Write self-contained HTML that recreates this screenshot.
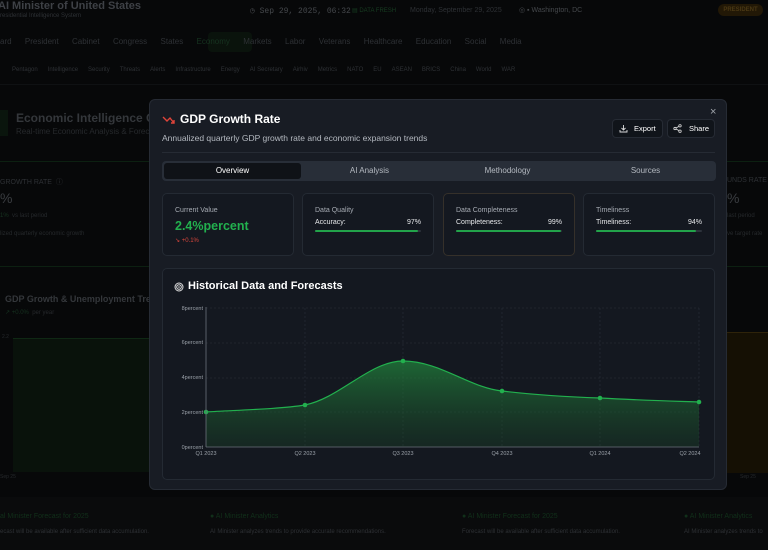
<!DOCTYPE html>
<html><head><meta charset="utf-8"><style>
*{margin:0;padding:0;box-sizing:border-box}
body{width:768px;height:550px;overflow:hidden;background:#070809;font-family:"Liberation Sans",sans-serif;position:relative;color:#fff}
.a{position:absolute;white-space:nowrap}
.dim{color:#2e3135}
.modal{position:absolute;left:149px;top:99px;width:578px;height:391px;background:#181c24;border:1px solid #262b34;border-radius:6px}
.card{position:absolute;top:93px;width:132px;height:63px;background:#141820;border:1px solid #242a33;border-radius:5px}
.lbl{font-size:7px;color:#a6abb3;position:absolute;left:12px;top:13px}
.row{position:absolute;left:12px;right:12px;top:25px;font-size:7px;color:#e6e8ea;display:flex;justify-content:space-between}
.bar{position:absolute;left:12px;right:12px;top:36px;height:2px;background:#2d333c;border-radius:1px}
.bar i{display:block;height:2px;background:#22a34a;border-radius:1px}
.tab{position:absolute;top:66px;text-align:center;font-size:8px;color:#b4b9c0}
</style></head><body>
<div class="a" style="left:-2px;top:0;font-size:11px;font-weight:bold;color:#3e4146">AI Minister of United States</div>
<div class="a" style="left:0;top:13px;font-size:6px;color:#2e3135">residential Intelligence System</div>
<div class="a" style="left:250px;top:6px;font-size:8px;color:#45484c;font-family:'Liberation Mono',monospace">◷ Sep 29, 2025, 06:32</div>
<div class="a" style="left:352px;top:7px;font-size:6px;color:#173d21">▤ DATA FRESH</div>
<div class="a" style="left:410px;top:7px;font-size:7px;color:#2e3135">Monday, September 29, 2025</div>
<div class="a" style="left:519px;top:6px;font-size:7px;color:#45484c">◎ ▪ Washington, DC</div>
<div class="a" style="left:718px;top:4px;width:45px;height:12px;border-radius:6px;background:#221806;color:#4a3814;font-size:6px;font-weight:bold;text-align:center;line-height:12px">PRESIDENT</div>
<div class="a" style="left:208px;top:32px;width:44px;height:20px;background:#0a130c;border-radius:4px"></div>
<div class="a dim" style="left:0;top:37px;font-size:8px">ard&nbsp;&nbsp;&nbsp;&nbsp;&nbsp;&nbsp;President&nbsp;&nbsp;&nbsp;&nbsp;&nbsp;&nbsp;Cabinet&nbsp;&nbsp;&nbsp;&nbsp;&nbsp;&nbsp;Congress&nbsp;&nbsp;&nbsp;&nbsp;&nbsp;&nbsp;States&nbsp;&nbsp;&nbsp;&nbsp;&nbsp;&nbsp;<span style="color:#163320">Economy</span>&nbsp;&nbsp;&nbsp;&nbsp;&nbsp;&nbsp;Markets&nbsp;&nbsp;&nbsp;&nbsp;&nbsp;&nbsp;Labor&nbsp;&nbsp;&nbsp;&nbsp;&nbsp;&nbsp;Veterans&nbsp;&nbsp;&nbsp;&nbsp;&nbsp;&nbsp;Healthcare&nbsp;&nbsp;&nbsp;&nbsp;&nbsp;&nbsp;Education&nbsp;&nbsp;&nbsp;&nbsp;&nbsp;&nbsp;Social&nbsp;&nbsp;&nbsp;&nbsp;&nbsp;&nbsp;Media</div>
<div class="a dim" style="left:12px;top:67px;font-size:6px">Pentagon&nbsp;&nbsp;&nbsp;&nbsp;&nbsp;&nbsp;Intelligence&nbsp;&nbsp;&nbsp;&nbsp;&nbsp;&nbsp;Security&nbsp;&nbsp;&nbsp;&nbsp;&nbsp;&nbsp;Threats&nbsp;&nbsp;&nbsp;&nbsp;&nbsp;&nbsp;Alerts&nbsp;&nbsp;&nbsp;&nbsp;&nbsp;&nbsp;Infrastructure&nbsp;&nbsp;&nbsp;&nbsp;&nbsp;&nbsp;Energy&nbsp;&nbsp;&nbsp;&nbsp;&nbsp;&nbsp;AI Secretary&nbsp;&nbsp;&nbsp;&nbsp;&nbsp;&nbsp;Airhiv&nbsp;&nbsp;&nbsp;&nbsp;&nbsp;&nbsp;Metrics&nbsp;&nbsp;&nbsp;&nbsp;&nbsp;&nbsp;NATO&nbsp;&nbsp;&nbsp;&nbsp;&nbsp;&nbsp;EU&nbsp;&nbsp;&nbsp;&nbsp;&nbsp;&nbsp;ASEAN&nbsp;&nbsp;&nbsp;&nbsp;&nbsp;&nbsp;BRICS&nbsp;&nbsp;&nbsp;&nbsp;&nbsp;&nbsp;China&nbsp;&nbsp;&nbsp;&nbsp;&nbsp;&nbsp;World&nbsp;&nbsp;&nbsp;&nbsp;&nbsp;&nbsp;WAR</div>
<div class="a" style="left:0;top:84px;width:768px;height:1px;background:#0f1113"></div>
<div class="a" style="left:0;top:110px;width:8px;height:26px;background:#0a150d"></div>
<div class="a" style="left:16px;top:111px;font-size:12px;font-weight:bold;color:#34373b">Economic Intelligence C</div>
<div class="a" style="left:16px;top:127px;font-size:8px;color:#26292c">Real-time Economic Analysis &amp; Forecasting</div>
<div class="a" style="left:0;top:161px;width:768px;height:1px;background:#0c2011"></div>
<div class="a" style="left:0;top:177px;font-size:7px;color:#2e3135">GROWTH RATE&nbsp;&nbsp;ⓘ</div>
<div class="a" style="left:0;top:190px;font-size:14px;color:#3a3d41">%</div>
<div class="a" style="left:0;top:213px;font-size:6px;color:#163320">1%&nbsp;&nbsp;<span style="color:#26292c">vs last period</span></div>
<div class="a" style="left:0;top:231px;font-size:6px;color:#26292c">lized quarterly economic growth</div>
<div class="a" style="left:0;top:266px;width:768px;height:1px;background:#0c2011"></div>
<div class="a" style="left:5px;top:294px;font-size:9px;font-weight:bold;color:#34373b">GDP Growth &amp; Unemployment Tre</div>
<div class="a" style="left:5px;top:309px;font-size:6px;color:#163320">↗ +0.0%&nbsp;&nbsp;<span style="color:#26292c">per year</span></div>
<div class="a" style="left:13px;top:338px;width:136px;height:134px;background:#09120b;border-top:1px solid #0f2814"></div>
<div class="a" style="left:2px;top:334px;font-size:5px;color:#26292c">2.2</div>
<div class="a" style="left:0;top:474px;font-size:5px;color:#26292c">Sep 25</div>
<div class="a" style="left:727px;top:332px;width:41px;height:141px;background:#151004;border-top:1px solid #2e230a"></div>
<div class="a" style="left:727px;top:177px;font-size:7px;color:#2e3135">UNDS RATE</div>
<div class="a" style="left:727px;top:190px;font-size:14px;color:#3a3d41">%</div>
<div class="a" style="left:727px;top:213px;font-size:6px;color:#26292c">last period</div>
<div class="a" style="left:727px;top:231px;font-size:6px;color:#26292c">ve target rate</div>
<div class="a" style="left:740px;top:474px;font-size:5px;color:#26292c">Sep 25</div>
<div class="a" style="left:0;top:497px;width:768px;height:53px;background:#0a0b0c"></div>
<div class="a" style="left:0;top:513px;font-size:7px;color:#11301a">al Minister Forecast for 2025</div>
<div class="a" style="left:0;top:529px;font-size:6px;color:#2e3135">ecast will be available after sufficient data accumulation.</div>
<div class="a" style="left:210px;top:513px;font-size:7px;color:#11301a">● AI Minister Analytics</div>
<div class="a" style="left:210px;top:529px;font-size:6px;color:#2e3135">AI Minister analyzes trends to provide accurate recommendations.</div>
<div class="a" style="left:462px;top:513px;font-size:7px;color:#11301a">● AI Minister Forecast for 2025</div>
<div class="a" style="left:462px;top:529px;font-size:6px;color:#2e3135">Forecast will be available after sufficient data accumulation.</div>
<div class="a" style="left:684px;top:513px;font-size:7px;color:#11301a">● AI Minister Analytics</div>
<div class="a" style="left:684px;top:529px;font-size:6px;color:#2e3135">AI Minister analyzes trends to</div>

<div class="modal">
 <svg class="a" style="left:12px;top:15px" width="14" height="10" viewBox="0 0 14 10"><path d="M1 2 L5 6 L8 3 L12 8 M9 8 H12 V5" stroke="#e0443a" stroke-width="1.4" fill="none"/></svg>
 <div class="a" style="left:30px;top:12px;font-size:12px;font-weight:bold;color:#fff">GDP Growth Rate</div>
 <div class="a" style="left:12px;top:33px;font-size:8.5px;color:#b4b9c0">Annualized quarterly GDP growth rate and economic expansion trends</div>
 <div class="a" style="left:560px;top:6px;font-size:11px;color:#a0a5ab">×</div>
 <div class="a" style="left:462px;top:19px;width:51px;height:19px;background:#10141a;border:1px solid #262b34;border-radius:4px;font-size:7.5px;line-height:17px;color:#fff;padding-left:21px">Export<svg class="a" style="left:6px;top:4px" width="9" height="9" viewBox="0 0 9 9"><path d="M4.5 1V6M2.5 4L4.5 6L6.5 4M1 6V8H8V6" stroke="#ddd" stroke-width=".9" fill="none"/></svg></div>
 <div class="a" style="left:517px;top:19px;width:48px;height:19px;background:#10141a;border:1px solid #262b34;border-radius:4px;font-size:7.5px;line-height:17px;color:#fff;padding-left:21px">Share<svg class="a" style="left:5px;top:4px" width="9" height="9" viewBox="0 0 9 9"><circle cx="7" cy="1.8" r="1.2" stroke="#ddd" stroke-width=".8" fill="none"/><circle cx="2" cy="4.5" r="1.2" stroke="#ddd" stroke-width=".8" fill="none"/><circle cx="7" cy="7.2" r="1.2" stroke="#ddd" stroke-width=".8" fill="none"/><path d="M3 4L6 2.4M3 5L6 6.6" stroke="#ddd" stroke-width=".8"/></svg></div>
 <div class="a" style="left:12px;top:52px;width:553px;height:1px;background:#262b34"></div>
 <div class="a" style="left:12px;top:61px;width:554px;height:20px;background:#282e38;border-radius:4px"></div>
 <div class="a" style="left:14px;top:63px;width:137px;height:16px;background:#0f1217;border-radius:3px"></div>
 <div class="tab" style="left:14px;width:137px;color:#fff">Overview</div>
 <div class="tab" style="left:151px;width:137px">AI Analysis</div>
 <div class="tab" style="left:288px;width:139px">Methodology</div>
 <div class="tab" style="left:427px;width:137px">Sources</div>
 <div class="card" style="left:12px"><div class="lbl">Current Value</div><div class="a" style="left:12px;top:25px;font-size:12.5px;font-weight:bold;color:#22b04e">2.4%percent</div><div class="a" style="left:12px;top:43px;font-size:6px;color:#d8463c">↘ +0.1%</div></div>
 <div class="card" style="left:152px"><div class="lbl">Data Quality</div><div class="row"><span>Accuracy:</span><span>97%</span></div><div class="bar"><i style="width:97%"></i></div></div>
 <div class="card" style="left:293px;border-color:#35302a"><div class="lbl">Data Completeness</div><div class="row"><span>Completeness:</span><span>99%</span></div><div class="bar"><i style="width:99%"></i></div></div>
 <div class="card" style="left:433px"><div class="lbl">Timeliness</div><div class="row"><span>Timeliness:</span><span>94%</span></div><div class="bar"><i style="width:94%"></i></div></div>
 <div class="a" style="left:12px;top:168px;width:553px;height:212px;background:#141820;border:1px solid #242a33;border-radius:5px"></div>
 <svg class="a" style="left:24px;top:182px" width="10" height="10" viewBox="0 0 10 10"><circle cx="5" cy="5" r="4" stroke="#ddd" fill="none"/><circle cx="5" cy="5" r="2.3" stroke="#ddd" fill="none"/><circle cx="5" cy="5" r=".8" fill="#ddd"/></svg>
 <div class="a" style="left:38px;top:180px;font-size:11px;font-weight:bold;color:#fff">Historical Data and Forecasts</div>
</div>
<svg class="a" style="left:0;top:0" width="768" height="550">
 <defs><linearGradient id="g" x1="0" y1="0" x2="0" y2="1"><stop offset="0" stop-color="#22883e" stop-opacity=".7"/><stop offset="1" stop-color="#1a4a28" stop-opacity=".3"/></linearGradient></defs>
 <g stroke="#2a303a" stroke-dasharray="2 2" stroke-width=".6">
  <line x1="206" y1="308" x2="699" y2="308"/><line x1="206" y1="343" x2="699" y2="343"/><line x1="206" y1="378" x2="699" y2="378"/><line x1="206" y1="412" x2="699" y2="412"/>
  <line x1="305" y1="308" x2="305" y2="447"/><line x1="403" y1="308" x2="403" y2="447"/><line x1="502" y1="308" x2="502" y2="447"/><line x1="600" y1="308" x2="600" y2="447"/><line x1="699" y1="308" x2="699" y2="447"/>
 </g>
 <path d="M206 412 C240 410 280 409 305 405 C340 398 370 361 403 361 C440 361 470 388 502 391 C535 395 570 397 600 398 C635 400 670 401 699 402 L699 447 L206 447 Z" fill="url(#g)"/>
 <path d="M206 412 C240 410 280 409 305 405 C340 398 370 361 403 361 C440 361 470 388 502 391 C535 395 570 397 600 398 C635 400 670 401 699 402" stroke="#22b04e" stroke-width="1.2" fill="none"/>
 <g fill="#22b04e"><circle cx="206" cy="412" r="2.3"/><circle cx="305" cy="405" r="2.3"/><circle cx="403" cy="361" r="2.3"/><circle cx="502" cy="391" r="2.3"/><circle cx="600" cy="398" r="2.3"/><circle cx="699" cy="402" r="2.3"/></g>
 <line x1="206" y1="307" x2="206" y2="447" stroke="#6b717a" stroke-width=".8"/><line x1="206" y1="447" x2="699" y2="447" stroke="#6b717a" stroke-width=".8"/>
 <g font-family="Liberation Sans" font-size="5.5" fill="#9aa0a8" text-anchor="end"><text x="203" y="310">8percent</text><text x="203" y="344">6percent</text><text x="203" y="379">4percent</text><text x="203" y="414">2percent</text><text x="203" y="449">0percent</text></g>
 <g font-family="Liberation Sans" font-size="5.5" fill="#9aa0a8" text-anchor="middle"><text x="206" y="455">Q1 2023</text><text x="305" y="455">Q2 2023</text><text x="403" y="455">Q3 2023</text><text x="502" y="455">Q4 2023</text><text x="600" y="455">Q1 2024</text><text x="690" y="455">Q2 2024</text></g>
</svg>
</body></html>
